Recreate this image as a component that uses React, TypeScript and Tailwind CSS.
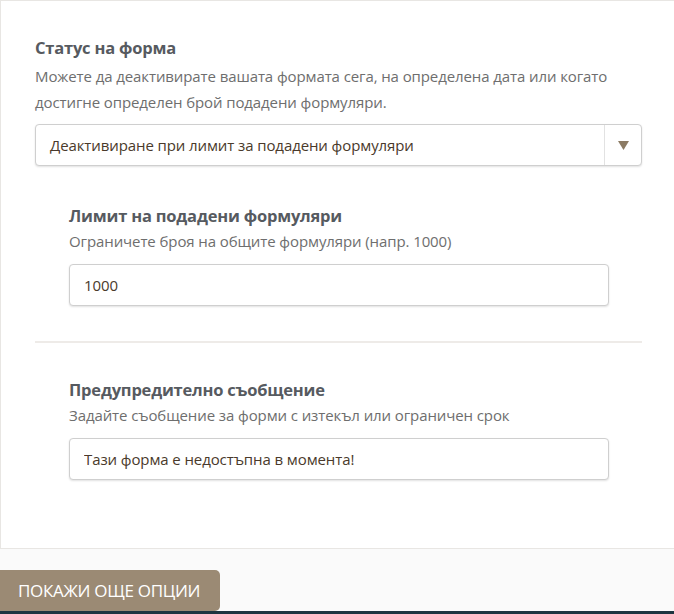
import React from 'react';

const font = { fontFamily: '"Open Sans", "Noto Sans", sans-serif' };

function Field({ title, hint, value }: { title: string; hint: string; value: string }) {
  return (
    <div className="pl-[34px] pr-[33px]">
      <h3 className="text-[16.5px] leading-[24px] font-bold text-[#565a60] tracking-[-0.2px]">{title}</h3>
      <p className="mt-[3px] text-[15px] leading-[20px] text-[#6e6e6e] tracking-[-0.1px]">{hint}</p>
      <input
        readOnly
        value={value}
        className="mt-[13px] w-full h-[42px] px-[14px] rounded-[4px] border border-[#cfcfcf] shadow-[0_1px_2px_rgba(0,0,0,0.12)] bg-white text-[15px] tracking-[-0.1px] text-[#4a3a2b] outline-none"
        style={font}
      />
    </div>
  );
}

export default function App() {
  return (
    <div className="w-[674px] h-[614px] bg-[#fafafa] overflow-hidden flex flex-col" style={font}>
      <div className="bg-white border-l border-t border-b border-[#e8e6e3] h-[549px] pl-[34px] pr-[32px] pt-[35px]">
        <h2 className="text-[16.5px] leading-[24px] font-bold text-[#565a60] tracking-[-0.2px]">Статус на форма</h2>
        <p className="mt-[3px] text-[15px] leading-[26px] text-[#6e6e6e] tracking-[-0.1px]">
          Можете да деактивирате вашата формата сега, на определена дата или когато достигне определен брой подадени формуляри.
        </p>
        <div className="mt-[9px] h-[42px] flex items-stretch rounded-[4px] border border-[#cfcfcf] shadow-[0_1px_2px_rgba(0,0,0,0.12)] bg-white">
          <div className="flex-1 flex items-center pl-[14px] text-[15px] tracking-[-0.1px] text-[#4a3a2b]">
            Деактивиране при лимит за подадени формуляри
          </div>
          <div className="w-[37px] border-l border-[#e2e2e2] flex items-center justify-center">
            <svg width="11" height="9" viewBox="0 0 11 9">
              <path d="M0 0H11L5.5 9Z" fill="#8c7b64" />
            </svg>
          </div>
        </div>

        <div className="mt-[38px]">
          <Field title="Лимит на подадени формуляри" hint="Ограничете броя на общите формуляри (напр. 1000)" value="1000" />
        </div>

        <div className="mt-[35px] h-[2px] bg-[#eeebe8]" />

        <div className="mt-[35px]">
          <Field
            title="Предупредително съобщение"
            hint="Задайте съобщение за форми с изтекъл или ограничен срок"
            value="Тази форма е недостъпна в момента!"
          />
        </div>
      </div>

      <div className="mt-[21px] flex-1 flex flex-col">
        <button className="w-[220px] h-[41px] bg-[#9b8a74] rounded-r-[5px] text-white text-[17px] tracking-[-0.3px] text-left pl-[18px] uppercase">
          Покажи още опции
        </button>
        <div className="flex-1 bg-[#1d3540]" />
      </div>
    </div>
  );
}
